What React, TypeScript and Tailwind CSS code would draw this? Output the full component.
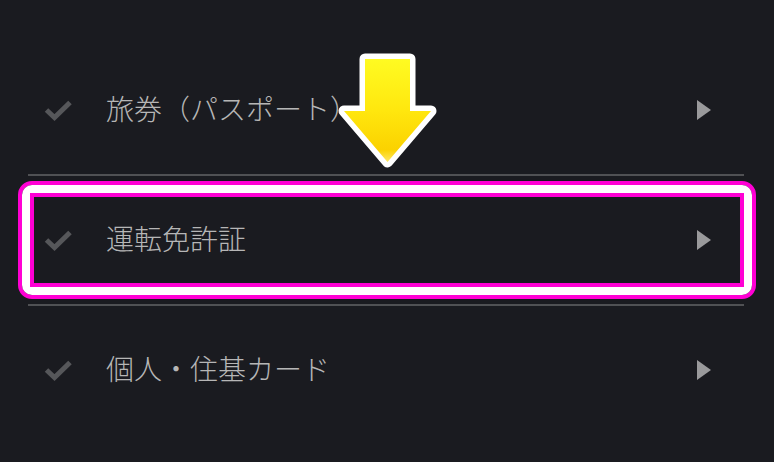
import React from "react"

const rows = ["旅券（パスポート）", "運転免許証", "個人・住基カード"]

function Check() {
  return (
    <svg width="29" height="22" viewBox="0 0 29 22" className="shrink-0">
      <path d="M2.500 11 L10.500 18.500 L26 3.500" fill="none" stroke="#56575a" strokeWidth="5" />
    </svg>
  )
}

function Chevron() {
  return (
    <svg width="16" height="22" viewBox="0 0 16 22" className="shrink-0">
      <path d="M1 1 L15 11 L1 21 Z" fill="#9a9a9c" />
    </svg>
  )
}

function Arrow() {
  const d = "M32 11 H77 V63 H98 L54.500 114 L11 63 H32 Z"
  return (
    <svg width="110" height="128" viewBox="0 0 110 128" className="absolute left-[333px] top-[48px]">
      <defs>
        <linearGradient id="arrowFill" x1="0" y1="0" x2="0" y2="1">
          <stop offset="0" stopColor="#fffb22" />
          <stop offset="0.5" stopColor="#ffe70e" />
          <stop offset="0.88" stopColor="#fbd200" />
          <stop offset="1" stopColor="#ffe866" />
        </linearGradient>
      </defs>
      <path d={d} fill="#ffffff" stroke="#ffffff" strokeWidth="11" strokeLinejoin="round" />
      <path d={d} fill="url(#arrowFill)" />
    </svg>
  )
}

export default function App() {
  return (
    <div
      className="relative h-[462px] w-[774px] overflow-hidden bg-[#1a1b20] pt-[46px]"
      style={{ fontFamily: '"Noto Sans CJK JP", "Liberation Sans", sans-serif' }}
    >
      <div className="mx-[28px] w-[716px]">
        {rows.map((label, i) => (
          <div
            key={label}
            className={`flex h-[130px] items-center border-b-2 pl-[16px] pr-[32px] ${
              i < rows.length - 1 ? "border-[#505154]" : "border-transparent"
            }`}
          >
            <Check />
            <span className="mb-[4px] ml-[33px] flex-1 text-[28px] leading-none font-light text-[#b6b6b6]">{label}</span>
            <Chevron />
          </div>
        ))}
      </div>

      {/* highlight box */}
      <div className="absolute left-[18px] top-[181px] h-[118px] w-[738px] rounded-[14px] border-4 border-[#ff00d4] bg-transparent">
        <div className="h-full w-full rounded-[10px] border-8 border-white">
          <div className="h-full w-full border-4 border-[#ff00d4]" />
        </div>
      </div>

      <Arrow />
    </div>
  )
}
